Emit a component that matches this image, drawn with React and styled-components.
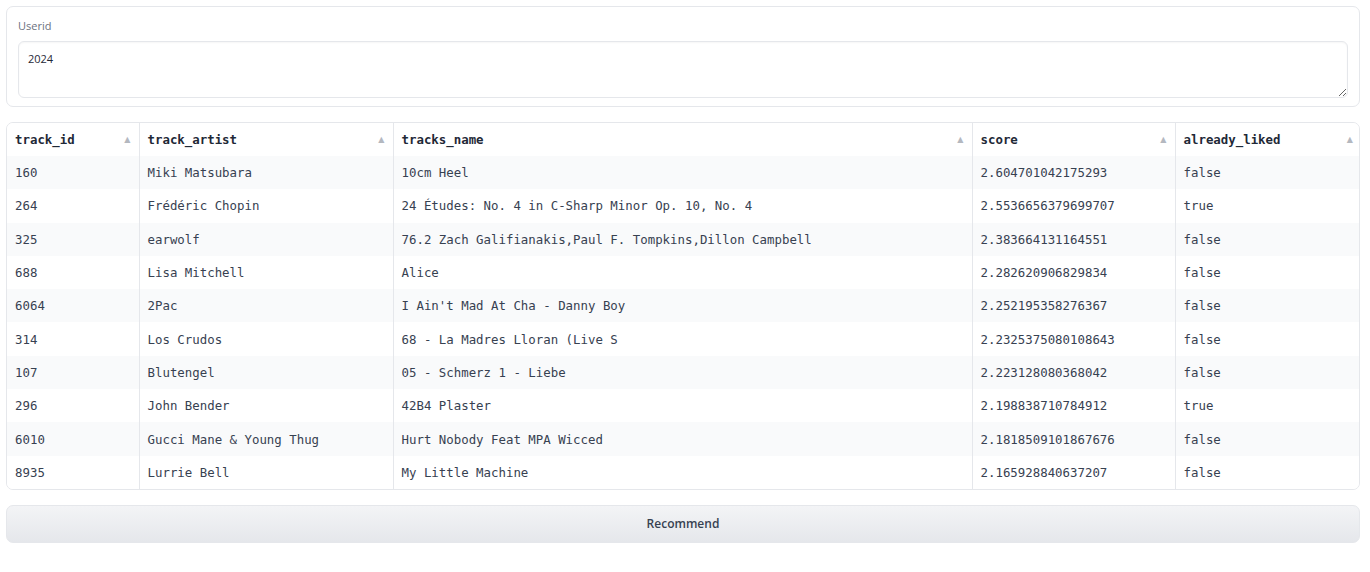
import React from 'react';
import styled, { createGlobalStyle } from 'styled-components';

const GlobalStyle = createGlobalStyle`
    html, body {
        margin: 0;
        padding: 0;
        background: #ffffff;
    }
    * {
        box-sizing: border-box;
    }
`;

const Page = styled.div`
    padding: 6px 10px 6px 6px;
    display: flex;
    flex-direction: column;
    gap: 15px;
    font-family: "Open Sans", "Noto Sans", sans-serif;
`;

const Block = styled.div`
    border: 1px solid #e5e7eb;
    border-radius: 7px;
    padding: 12px 11px 8px 11px;
    display: flex;
    flex-direction: column;
    gap: 8px;
    background: #fff;
`;

const Label = styled.label`
    font-size: 11px;
    line-height: 14px;
    color: #6b7280;
`;

const TextArea = styled.textarea`
    width: 100%;
    height: 57px;
    border: 1px solid #e5e7eb;
    border-radius: 6px;
    padding: 10px 9px;
    font-family: "Open Sans", "Noto Sans", sans-serif;
    font-size: 11px;
    line-height: 14px;
    color: #1f2937;
    box-shadow: inset 0 1px 2px rgba(0, 0, 0, 0.04);
    outline: none;
    resize: vertical;
    display: block;
`;

const TableWrap = styled.div`
    border: 1px solid #e5e7eb;
    border-radius: 7px;
    overflow: hidden;
`;

const Table = styled.table`
    width: 100%;
    border-collapse: collapse;
    table-layout: fixed;
    font-family: "DejaVu Sans Mono", "Liberation Mono", monospace;
    font-size: 12.4px;
`;

const HeadCell = styled.th`
    height: 33px;
    padding: 0 8px;
    text-align: left;
    font-weight: bold;
    color: #1f2937;
    border-left: ${p => (p.$first ? 'none' : '1px solid #e5e7eb')};
    background: #fff;
`;

const HeadInner = styled.div`
    display: flex;
    align-items: center;
    justify-content: space-between;
`;

const SortArrow = styled.span`
    font-size: 8px;
    color: #b4b8bf;
    font-family: "DejaVu Sans", sans-serif;
`;

const Row = styled.tr`
    background: ${p => (p.$shaded ? '#f9fafb' : '#ffffff')};
`;

const Cell = styled.td`
    height: 33.3px;
    padding: 0 8px;
    color: #374151;
    white-space: nowrap;
    overflow: hidden;
    border-left: ${p => (p.$first ? 'none' : '1px solid #e5e7eb')};
`;

const Button = styled.button`
    height: 38px;
    width: 100%;
    border: 1px solid #e5e7eb;
    border-radius: 7px;
    background: linear-gradient(to bottom, #f3f4f6, #e5e7eb);
    font-family: "Open Sans", "Noto Sans", sans-serif;
    font-size: 12px;
    font-weight: 600;
    color: #374151;
    cursor: pointer;
`;

const columns = [
    { key: 'track_id', width: 132 },
    { key: 'track_artist', width: 254 },
    { key: 'tracks_name', width: 579 },
    { key: 'score', width: 203 },
    { key: 'already_liked', width: 186 },
];

const rows = [
    ['160', 'Miki Matsubara', '10cm Heel', '2.604701042175293', 'false'],
    ['264', 'Frédéric Chopin', '24 Études: No. 4 in C-Sharp Minor Op. 10, No. 4', '2.5536656379699707', 'true'],
    ['325', 'earwolf', '76.2 Zach Galifianakis,Paul F. Tompkins,Dillon Campbell', '2.383664131164551', 'false'],
    ['688', 'Lisa Mitchell', 'Alice', '2.282620906829834', 'false'],
    ['6064', '2Pac', "I Ain't Mad At Cha - Danny Boy", '2.252195358276367', 'false'],
    ['314', 'Los Crudos', '68 - La Madres Lloran (Live S', '2.2325375080108643', 'false'],
    ['107', 'Blutengel', '05 - Schmerz 1 - Liebe', '2.223128080368042', 'false'],
    ['296', 'John Bender', '42B4 Plaster', '2.198838710784912', 'true'],
    ['6010', 'Gucci Mane & Young Thug', 'Hurt Nobody Feat MPA Wicced', '2.1818509101867676', 'false'],
    ['8935', 'Lurrie Bell', 'My Little Machine', '2.165928840637207', 'false'],
];

function App() {
    return (
        <React.Fragment>
            <GlobalStyle />
            <Page>
                <Block>
                    <Label>Userid</Label>
                    <TextArea defaultValue="2024" />
                </Block>
                <TableWrap>
                    <Table>
                        <colgroup>
                            {columns.map(c => (
                                <col key={c.key} style={{ width: c.width }} />
                            ))}
                        </colgroup>
                        <thead>
                            <tr>
                                {columns.map((c, i) => (
                                    <HeadCell key={c.key} $first={i === 0}>
                                        <HeadInner>
                                            <span>{c.key}</span>
                                            <SortArrow>▲</SortArrow>
                                        </HeadInner>
                                    </HeadCell>
                                ))}
                            </tr>
                        </thead>
                        <tbody>
                            {rows.map((r, i) => (
                                <Row key={i} $shaded={i % 2 === 0}>
                                    {r.map((v, j) => (
                                        <Cell key={j} $first={j === 0}>{v}</Cell>
                                    ))}
                                </Row>
                            ))}
                        </tbody>
                    </Table>
                </TableWrap>
                <Button>Recommend</Button>
            </Page>
        </React.Fragment>
    );
}

export default App;
